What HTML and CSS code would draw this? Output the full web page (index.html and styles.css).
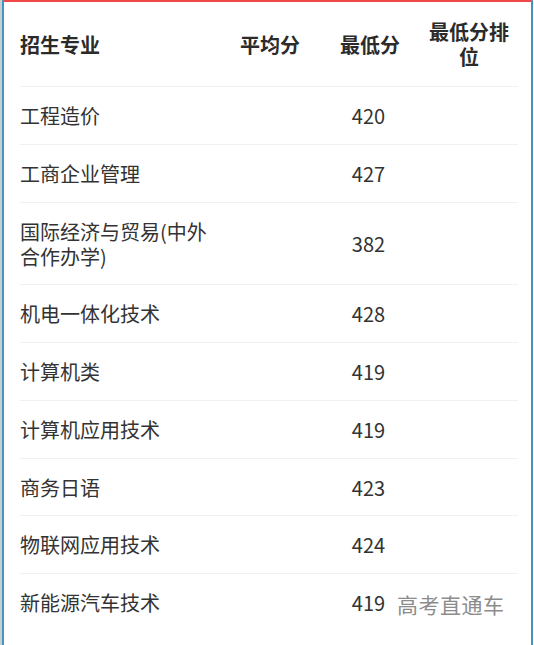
FILE: index.html
```html
<!DOCTYPE html>
<html lang="zh">
<head>
<meta charset="utf-8">
<link rel="stylesheet" href="styles.css">
</head>
<body>
<div class="page">
  <div class="gutter"></div>
  <div class="frame">
    <div class="panel">
      <table class="scores">
        <colgroup>
          <col class="c-name"><col class="c-avg"><col class="c-min"><col class="c-rank">
        </colgroup>
        <thead>
          <tr><th class="name">招生专业</th><th>平均分</th><th>最低分</th><th class="rank">最低分排位</th></tr>
        </thead>
        <tbody>
          <tr><td class="name">工程造价</td><td></td><td class="num">420</td><td></td></tr>
          <tr><td class="name">工商企业管理</td><td></td><td class="num">427</td><td></td></tr>
          <tr><td class="name">国际经济与贸易(中外合作办学)</td><td></td><td class="num">382</td><td></td></tr>
          <tr><td class="name">机电一体化技术</td><td></td><td class="num">428</td><td></td></tr>
          <tr><td class="name">计算机类</td><td></td><td class="num">419</td><td></td></tr>
          <tr><td class="name">计算机应用技术</td><td></td><td class="num">419</td><td></td></tr>
          <tr><td class="name">商务日语</td><td></td><td class="num">423</td><td></td></tr>
          <tr><td class="name">物联网应用技术</td><td></td><td class="num">424</td><td></td></tr>
          <tr><td class="name">新能源汽车技术</td><td></td><td class="num">419</td><td></td></tr>
        </tbody>
      </table>
      <div class="watermark">高考直通车</div>
    </div>
  </div>
</div>
</body>
</html>
```
FILE: styles.css
```css
html, body {
  margin: 0;
  padding: 0;
  background: #ffffff;
}
body {
  font-family: "Noto Sans CJK SC", "Noto Sans", sans-serif;
  color: #333333;
}
.page {
  display: flex;
  width: 534px;
  height: 645px;
  overflow: hidden;
}
.gutter {
  width: 2px;
  background: #c9ced3;
  flex: none;
}
.frame {
  width: 527px;
  flex: none;
  border-left: 2px solid #4397bd;
  border-right: 2px solid #4397bd;
}
.panel {
  position: relative;
  height: 100%;
  border-top: 2px solid #f04848;
  padding-left: 16px;
  box-sizing: border-box;
}
.scores {
  border-collapse: collapse;
  table-layout: fixed;
  width: 498px;
}
.c-name { width: 200px; }
.c-avg { width: 100px; }
.c-min { width: 100px; }
.c-rank { width: 98px; }
.scores th,
.scores td {
  font-size: 20px;
  line-height: 25px;
  padding: 16px 0;
  text-align: center;
  vertical-align: middle;
  border-bottom: 1px solid #f0f0f0;
}
.scores th {
  font-weight: bold;
  color: #2b2b2b;
  padding: 17px 0;
}
.scores th.rank {
  padding-left: 9px;
  padding-right: 9px;
}
.scores td {
  color: #333333;
  padding: 16px 0 15.75px;
}
.scores .name {
  text-align: left;
}
.scores td.num {
  padding-right: 3px;
}
.scores tbody tr:last-child td {
  border-bottom: none;
}
.watermark {
  position: absolute;
  left: 393px;
  top: 589px;
  font-size: 21px;
  line-height: 26px;
  color: #8c8c8c;
  letter-spacing: 0.5px;
}
```
